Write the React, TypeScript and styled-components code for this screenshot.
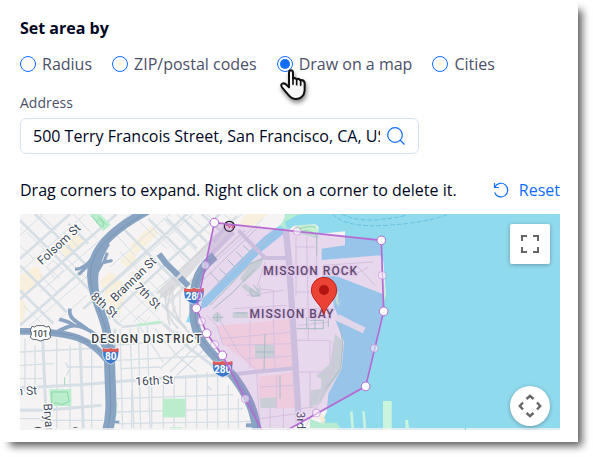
import React, { useState } from 'react';
import styled, { createGlobalStyle } from 'styled-components';

const GlobalStyle = createGlobalStyle`
  *, *::before, *::after { box-sizing: border-box; }
  body { margin: 0; background: #fff; font-family: "Open Sans", "Noto Sans", sans-serif; color: #000624; }
`;

const Page = styled.div`
  padding: 0 15px 15px 0;
`;

const Card = styled.main`
  background: #fff;
  padding: 16px 18px 12px 20px;
  box-shadow: 7px 7px 8px -3px rgba(0, 0, 0, 0.65);
`;

const RadioSet = styled.fieldset`
  border: 0;
  margin: 0;
  padding: 0;
`;

const SetTitle = styled.legend`
  padding: 0;
  font-size: 16px;
  line-height: 24px;
  font-weight: 700;
`;

const RadioRow = styled.div`
  display: flex;
  gap: 20px;
  padding-top: 12px;
`;

const RadioLabel = styled.label`
  position: relative;
  display: flex;
  align-items: center;
  gap: 6px;
  font-size: 16px;
  line-height: 24px;
  color: #4c4f69;
  white-space: nowrap;
`;

const Radio = styled.input`
  appearance: none;
  flex: none;
  width: 16px;
  height: 16px;
  margin: 0;
  border: 1px solid #116dff;
  border-radius: 50%;
  background: #fff;
  &:checked {
    padding: 2px;
    background: #116dff content-box;
  }
`;

const Pointer = styled.svg`
  position: absolute;
  left: 3px;
  top: 17px;
  z-index: 1;
  width: 28px;
  height: 32px;
  overflow: visible;
  filter: drop-shadow(1px 3px 2px rgba(0, 0, 0, 0.45));
  pointer-events: none;
`;

const FieldLabel = styled.label`
  display: block;
  padding-top: 18px;
  font-size: 14px;
  line-height: 18px;
  color: #4c4f69;
`;

const SearchBox = styled.div`
  display: flex;
  align-items: center;
  gap: 6px;
  max-width: 399px;
  height: 36px;
  margin-top: 6px;
  padding: 0 12px;
  border: 1px solid #d3e3fd;
  border-radius: 6px;
`;

const AddressInput = styled.input`
  flex: 1;
  min-width: 0;
  height: 100%;
  padding: 0;
  border: 0;
  outline: 0;
  background: none;
  font: inherit;
  font-size: 16px;
  color: #000624;
`;

const IconButton = styled.button`
  display: flex;
  padding: 0;
  border: 0;
  background: none;
  color: #116dff;
`;

const HintRow = styled.div`
  display: flex;
  align-items: center;
  justify-content: space-between;
  padding: 24px 0 12px;
  font-size: 16px;
  line-height: 24px;
`;

const Hint = styled.p`
  margin: 0;
`;

const ResetButton = styled.button`
  display: flex;
  align-items: center;
  gap: 10px;
  padding: 0;
  border: 0;
  background: none;
  color: #116dff;
  font: inherit;
`;

const MapFrame = styled.section`
  position: relative;
  height: 216px;
  overflow: hidden;
  background: #90daee;
`;

const MapDrawing = styled.svg`
  display: block;
  width: 100%;
  height: 100%;
`;

const MapButton = styled.button<{ $round?: boolean }>`
  position: absolute;
  right: 10px;
  ${(p) => (p.$round ? 'bottom: 4px;' : 'top: 10px;')}
  display: flex;
  align-items: center;
  justify-content: center;
  width: 40px;
  height: 40px;
  padding: 0;
  border: 0;
  border-radius: ${(p) => (p.$round ? '50%' : '2px')};
  background: #fff;
  box-shadow: 0 1px 4px rgba(0, 0, 0, 0.3);
`;

const StreetText = styled.text`
  font-family: Roboto, sans-serif;
  font-size: 36px;
  fill: #3f4a5c;
  stroke: #fff;
  stroke-width: 7px;
  stroke-linejoin: round;
  paint-order: stroke;
  text-anchor: middle;
  dominant-baseline: central;
`;

const DistrictText = styled(StreetText)<{ $inside?: boolean }>`
  font-weight: 500;
  letter-spacing: 3px;
  fill: ${(p) => (p.$inside ? '#4b4358' : '#3a3d42')};
  stroke: ${(p) => (p.$inside ? '#ecdff0' : '#fff')};
`;

const ShieldText = styled.text<{ $dark?: boolean }>`
  font-family: Roboto, sans-serif;
  font-size: ${(p) => (p.$dark ? 27 : 30)}px;
  font-weight: ${(p) => (p.$dark ? 500 : 700)};
  fill: ${(p) => (p.$dark ? '#4b5158' : '#fff')};
  text-anchor: middle;
`;

const methods = ['Radius', 'ZIP/postal codes', 'Draw on a map', 'Cities'];

const corners: [number, number][] = [
  [583, 32], [1084, 85], [1091, 298], [1037, 523], [743, 687], [607, 430], [560, 364], [529, 289],
];
const midpoints: [number, number][] = [
  [832, 58], [1087, 190], [1063, 409], [889, 603], [676, 560], [584, 398], [544, 328], [556, 160],
];
const area = corners.map((c) => c.join(',')).join(' ');

function Shield({ x, y, label }: { x: number; y: number; label: string }) {
  const w = label.length > 2 ? 29 : 23;
  return (
    <g transform={`translate(${x} ${y})`}>
      <path
        d={`M${-w} -23 Q${-w / 2} -17 0 -23 Q${w / 2} -17 ${w} -23 Q${w + 4} 0 ${w - 5} 13 Q${w / 2} 22 0 26 Q${-w / 2} 22 ${-w + 5} 13 Q${-w - 4} 0 ${-w} -23Z`}
        fill="#3c78c8" stroke="#fff" strokeWidth="2"
      />
      <path d={`M${-w} -23 Q${-w / 2} -17 0 -23 Q${w / 2} -17 ${w} -23 L${w + 1} -12 H${-w - 1}Z`} fill="#e25b56" />
      <ShieldText y="13">{label}</ShieldText>
    </g>
  );
}

function CityMap() {
  return (
    <MapDrawing viewBox="0 6 1620 648" preserveAspectRatio="xMinYMin slice" role="img" aria-label="Map of Mission Bay">
      <defs>
        <clipPath id="soma">
          <path d="M0 6H800L735 70L530 270L500 350L300 342L225 310L150 290L100 350H0Z" />
        </clipPath>
        <clipPath id="south">
          <path d="M0 372H100L200 380L250 352L420 330L500 350L600 470L690 580L705 654H0Z" />
        </clipPath>
      </defs>
      <rect y="6" width="1620" height="648" fill="#f5f3f4" />

      {/* commercial blocks */}
      <g fill="#f8efdc">
        <path d="M0 190L50 160L75 200L22 245H0Z" />
        <path d="M110 100L170 55L200 85L140 140Z" />
        <path d="M330 100L395 40L415 65L345 130Z" />
        <path d="M240 205L275 180L320 225L300 310L262 270Z" />
        <path d="M0 250L20 285L10 325L0 335Z" />
        <path d="M680 6H745L690 50L660 35Z" />
        <path d="M300 150L330 115L350 140L325 170Z" />
      </g>

      {/* diagonal street grid */}
      <g clipPath="url(#soma)" fill="none" stroke="#d5dfe5">
        <path strokeWidth="3" d="M0 70L70 6M0 180L195 6M60 240L330 6M28 342L205 190M110 330L200 250M280 215L520 6M270 165L450 6M300 330L640 30M340 330L430 250M420 225L665 6M440 280L730 20M60 190L115 245M20 60L90 130M60 6L110 55M130 60L180 110M160 6L230 80M110 110L200 200M290 70L345 130M320 60L400 140M350 20L440 110M400 50L510 160M430 20L540 130M470 6L570 100M500 6L590 85M300 270L370 340M330 235L420 325M380 200L470 290M410 180L450 220M0 100L40 140M10 280L65 335M120 285L160 325M300 120L370 190M560 6L610 50M610 6L650 40M80 165L100 145L130 175L105 200ZM88 168L120 200M350 310L375 330L390 315" />
        <path strokeWidth="8" d="M0 140L150 6M0 262L290 6M0 340L90 262L215 150M190 290L455 50L500 6M240 342L400 190L600 6M0 25L215 240M45 6L200 160M145 35L205 95M0 160L160 320M0 235L100 335M300 40L520 260M385 20L510 145M365 220L510 360M440 20L530 110M235 275L305 345M490 20L560 90M545 6L600 55" />
      </g>

      {/* southern street grid */}
      <g clipPath="url(#south)" fill="none" stroke="#d5dfe5">
        <path strokeWidth="4" d="M15 380V540M45 400V520M110 380V654M150 400V654M215 400V654M300 350L308 654M330 350L342 654M355 345L362 654M382 340L390 654M335 535V654M395 500V654M430 500V654M462 495V654M497 490V654M530 485V654M562 480V654M593 490V654M625 520V654M655 560V654M0 420L240 408M0 460L100 455M140 465H250M285 400L410 390M285 445L600 430M300 470L420 465M290 560L640 548M290 600L670 590M60 625H250M290 635L700 628M0 500H70M420 470L520 380M450 480L540 390M470 490L560 405M360 345L430 450M405 350L470 430L530 480M0 620H60M135 452L150 470L140 490M560 520L575 535" />
        <path strokeWidth="9" d="M68 375L80 654M180 390L190 654M0 528L180 518L400 500L610 488L640 485M0 595H80L245 580M285 350V420M430 335L510 410L610 485" />
      </g>
      <path d="M305 345L430 331" fill="none" stroke="#d5dfe5" strokeWidth="7" />

      {/* parks */}
      <g fill="#b9edcc">
        <path d="M208 6H240L272 38L250 57Z" />
        <path d="M88 532H154V582H92Z" />
        <rect x="428" y="560" width="68" height="56" />
        <path d="M350 336L420 326L424 332L356 343Z" />
        <rect x="450" y="646" width="38" height="8" />
        <path d="M286 570H292L290 614H284Z" />
      </g>
      <path
        d="M215 12L230 30M235 14L260 40M228 30Q245 15 250 35T228 30M95 540H142L148 568L125 578L108 572L96 578ZM134 496V518"
        fill="none" stroke="#83d3a6" strokeWidth="2.5"
      />

      {/* rail yard */}
      <g fill="none" stroke="#d1d3d8">
        <path d="M425 252L480 200L560 110L640 35" strokeWidth="26" opacity=".65" />
        <path d="M410 245L650 12M450 265L675 55M420 255L460 220Q430 290 450 340M440 240Q425 300 475 350M460 225Q445 300 510 365" strokeWidth="5" opacity=".8" />
      </g>
      <path d="M440 350L500 370M480 240V320M460 250V310" stroke="#dfe1e5" strokeWidth="5" />

      {/* Mission Bay ground */}
      <path d="M590 342L815 320L824 468L710 480L670 442L610 400Z" fill="#fde4e2" />
      <path d="M715 494L822 480L828 588L770 590L718 560Z" fill="#fde4e2" />
      <g fill="#cfe7d8">
        <path d="M705 399H763V439H705Z" />
        <path d="M720 559L770 556V588H722Z" />
        <path d="M638 300H684V318H638Z" />
        <path d="M660 200L690 155L735 132L720 165L672 212Z" />
        <path d="M662 222L676 215L712 240L722 214V255H700Z" />
        <path d="M945 365L970 390L960 480L920 540L898 580L905 502L888 492L930 455Z" />
        <path d="M872 535L905 530L895 575L868 588Z" />
        <circle cx="592" cy="316" r="14" />
      </g>
      <path d="M825 40L885 38L895 55V80L830 62Z" fill="#c5f0d2" />
      <path d="M835 52Q865 40 888 46M840 62Q860 45 890 70" stroke="#98d7b3" strokeWidth="3" fill="none" />

      {/* water */}
      <g fill="#90daee">
        <path d="M795 6H1620V654H952L942 636L905 632L920 600L925 545L965 470L972 390L945 322L1028 363L1036 347L955 312L942 285L938 250L925 235L905 192L950 193L1098 250L1090 150L1080 130L905 144V110L975 100V58L895 66V44L885 37L800 42Z" />
        <path d="M548 260L640 165L730 76L785 36L800 6H850V20L805 54L720 122L655 190L560 284L540 292Z" />
        <path d="M508 305L498 330L515 332V305Z" />
      </g>
      <path d="M938 6Q975 48 1100 40T1285 6M965 6Q1010 30 1085 22T1160 6" fill="none" stroke="#66c3dc" strokeWidth="3" strokeDasharray="14 6" />
      <path d="M780 42L800 52L795 30L830 10L850 6H800Z" fill="#b6edd2" />
      <g fill="#caf5dd">
        <path d="M1089 567H1115V654H1089Z" />
        <path d="M990 600L998 598L1002 648H994ZM1027 598L1034 597L1039 648H1031ZM1155 625L1164 623L1167 648H1157Z" />
        <path d="M870 620L900 632H950L962 648H870Z" fill="#b6ebcf" />
        <path d="M955 235L945 262L952 280L963 265L948 310L955 290Z" />
      </g>
      <path d="M897 615L905 605L917 625L910 636Z" fill="#f7ead3" />
      <path d="M1084 150L1098 250L1092 268L1086 215Z" fill="#cfe7d8" />

      {/* Mission Bay streets */}
      <g fill="none" stroke="#d3d3e2">
        <path d="M600 492L700 480L830 468M655 55L735 138H806M630 30L580 90" strokeWidth="12" />
        <path d="M797 50L806 140L818 320L838 654" strokeWidth="19" />
        <path d="M570 130L640 60" strokeWidth="15" />
      </g>
      <g fill="none" stroke="#dcd5e3" strokeWidth="3">
        <path d="M600 380L820 360M690 325V470M760 320L765 470M620 400L820 395M680 440L822 432M600 325L655 420L715 480M560 310L590 340L610 400M770 490V590M720 525L825 520M710 480L720 654M750 590V654M790 590V654M720 620L830 605M735 150L710 230L760 235V320M755 175L790 180M680 250L790 235M640 290L800 280M825 105H885M828 75V250M860 75L865 330M890 70V250M825 180L890 175M828 240H925M830 290H930M835 340L925 330M865 340V385M830 385H928L940 395V470L888 590L850 654M835 480H930M840 590L885 585M930 385V460M910 160L1060 150M1000 190L1045 165M1010 160L1065 220M870 480V585" />
      </g>
      <g fill="none" stroke="#a6cfc2" strokeWidth="3">
        <path d="M570 280L625 225L690 155L730 140M580 290L640 240L705 170M735 365L732 475M707 420H762M780 490V560M690 230L720 250L695 253ZM700 218L715 240M860 315V350M870 325H910V350H830M885 315V355M925 320V345M645 303H680M592 300V330M576 316H610M890 70V130M960 335L968 400L962 470L918 530M598 210L570 182M620 190L598 170M645 165L622 142M670 140L648 118M690 120L670 100" />
      </g>
      <path d="M548 205L720 40M575 235L745 75" stroke="#c9d3dc" strokeWidth="3" fill="none" />
      <path d="M948 310L960 308L1036 347L1028 363L945 325Z" fill="#eef0f1" />

      {/* freeways */}
      <g fill="none" stroke="#89a4c2" strokeLinejoin="round">
        <path d="M385 -6C310 35 213 95 214 190C216 270 268 320 268 430" strokeWidth="26" />
        <path d="M268 400C268 540 282 590 262 660" strokeWidth="33" />
        <path d="M265 95C225 155 220 210 240 275" strokeWidth="12" />
        <path d="M222 130C205 155 190 170 165 172M215 150L176 188M262 122L252 150L274 146L248 152L232 180" strokeWidth="9" />
        <path d="M-5 358H60C130 366 200 365 262 445" strokeWidth="20" />
        <path d="M95 368C140 345 155 333 190 347C220 358 245 382 255 415M150 290C143 325 180 330 205 355M118 322L145 330L165 342" strokeWidth="11" />
        <path d="M262 630H298" strokeWidth="8" />
        <path d="M417 126L438 154L475 190M480 196L505 222" strokeWidth="18" />
        <path d="M584 132C520 180 520 240 522 310C525 400 600 440 646 500C690 560 703 600 712 660" strokeWidth="27" />
        <path d="M678 640H705" strokeWidth="12" />
      </g>
      <path
        d="M370 6C310 45 210 100 211 190C214 270 266 320 268 430C268 540 280 590 262 654M574 142C520 190 524 240 526 310C530 400 605 440 650 505C694 560 705 600 714 654M0 358H60C130 366 200 365 250 430"
        fill="none" stroke="#7896b7" strokeWidth="3"
      />

      {/* labels */}
      <StreetText transform="translate(117 97) rotate(-43)">Folsom St</StreetText>
      <StreetText transform="translate(340 202) rotate(-44)">Brannan St</StreetText>
      <StreetText transform="translate(253 279) rotate(42)">8th St</StreetText>
      <StreetText transform="translate(383 252) rotate(45)">7th St</StreetText>
      <StreetText transform="translate(403 506) rotate(-3)">16th St</StreetText>
      <StreetText transform="translate(-6 538) rotate(-3)">16th St</StreetText>
      <StreetText transform="translate(86 626) rotate(86)">Bryant</StreetText>
      <StreetText transform="translate(843 646) rotate(88)">3rd St</StreetText>
      <DistrictText x="381" y="382">DESIGN DISTRICT</DistrictText>
      <DistrictText $inside x="872" y="178">MISSION ROCK</DistrictText>
      <DistrictText $inside x="816" y="306">MISSION BAY</DistrictText>

      {/* route shields */}
      <path d="M36 343Q45 348 50 341H72Q78 348 87 343L92 354Q85 365 92 376Q86 384 72 383L61 387L50 383Q36 384 31 376Q38 365 31 354Z" fill="#fff" stroke="#5d646c" strokeWidth="3" />
      <ShieldText $dark x="61" y="374">101</ShieldText>
      <Shield x={272} y={431} label="80" />
      <Shield x={522} y={251} label="280" />
      <Shield x={608} y={470} label="280" />

      <circle cx="628" cy="43" r="15" fill="#eadfea" stroke="#17151a" strokeWidth="4" />
      <path d="M618 39L630 44L626 48M630 38L640 42L636 49" fill="none" stroke="#df5470" strokeWidth="4" />

      {/* selected area */}
      <polygon points={area} fill="rgb(180,110,210)" fillOpacity=".2" stroke="#b56bd3" strokeWidth="5" />
      {midpoints.map(([x, y]) => (
        <circle key={`m${x}`} cx={x} cy={y} r="12" fill="#fff" fillOpacity=".5" stroke="#b56bd3" strokeOpacity=".5" strokeWidth="3" />
      ))}
      {corners.map(([x, y]) => (
        <circle key={`c${x}`} cx={x} cy={y} r="13" fill="#fff" stroke="#b56bd3" strokeWidth="3" />
      ))}

      {/* attribution strip */}
      <path d="M0 648H1620V654H0Z" fill="#f3f3f3" opacity=".8" />
      <path d="M1336 648V654" stroke="#7bc7dc" strokeWidth="3" />
      <path d="M42 648Q54 642 66 648ZM158 648Q166 643 174 648Z" fill="#303236" />

      <path d="M912 308C907 278 874 265 874 234A38 38 0 0 1 950 234C950 265 917 278 912 308Z" fill="#ea4335" stroke="#c5221f" strokeWidth="3" />
      <circle cx="912" cy="234" r="15" fill="#b31412" />
    </MapDrawing>
  );
}

export default function App() {
  const [method, setMethod] = useState('Draw on a map');
  return (
    <>
      <GlobalStyle />
      <Page>
        <Card>
          <RadioSet>
            <SetTitle>Set area by</SetTitle>
            <RadioRow>
              {methods.map((m) => (
                <RadioLabel key={m}>
                  <Radio type="radio" name="method" value={m} checked={method === m} onChange={() => setMethod(m)} />
                  {m}
                  {m === 'Draw on a map' && (
                    <Pointer viewBox="0 0 84 96" aria-hidden="true">
                      <path
                        d="M27 12Q27 4 33 4Q39 4 39 12V29Q46 25 50 31Q57 27 61 34Q70 31 74 41V64Q73 77 65 84Q57 91 45 90Q34 89 27 80L6 55Q1 47 7 44Q13 41 20 48L27 55Z"
                        fill="#f7f7f7" stroke="#111" strokeWidth="6" strokeLinejoin="round"
                      />
                      <path d="M39 28V46M50 32V47M62 35V49" stroke="#111" strokeWidth="5" strokeLinecap="round" />
                    </Pointer>
                  )}
                </RadioLabel>
              ))}
            </RadioRow>
          </RadioSet>

          <FieldLabel htmlFor="address">Address</FieldLabel>
          <SearchBox>
            <AddressInput id="address" defaultValue="500 Terry Francois Street, San Francisco, CA, USA" />
            <IconButton type="button" aria-label="Search">
              <svg width="20" height="20" viewBox="0 0 20 20" fill="none" stroke="currentColor" strokeWidth="1.2">
                <circle cx="9" cy="9" r="7.3" />
                <path d="M14 14L18.5 18.5" />
              </svg>
            </IconButton>
          </SearchBox>

          <HintRow>
            <Hint>Drag corners to expand. Right click on a corner to delete it.</Hint>
            <ResetButton type="button">
              <svg width="16" height="16" viewBox="0 0 16 16" fill="none" stroke="currentColor" strokeWidth="1.2">
                <path d="M1.5 1V5.5H6M1.8 5.2A6.8 6.8 0 1 1 1.6 10.5" />
              </svg>
              Reset
            </ResetButton>
          </HintRow>

          <MapFrame>
            <CityMap />
            <MapButton type="button" aria-label="Full screen">
              <svg width="18" height="18" viewBox="0 0 18 18" fill="none" stroke="#666" strokeWidth="2">
                <path d="M1 6V1H6M12 1H17V6M17 12V17H12M6 17H1V12" />
              </svg>
            </MapButton>
            <MapButton type="button" $round aria-label="Camera controls">
              <svg width="24" height="24" viewBox="0 0 24 24" fill="none" stroke="#666" strokeWidth="2.4">
                <path d="M8.5 5L12 1.8L15.5 5M8.5 19L12 22.2L15.5 19M5 8.5L1.8 12L5 15.5M19 8.5L22.2 12L19 15.5" />
              </svg>
            </MapButton>
          </MapFrame>
        </Card>
      </Page>
    </>
  );
}
